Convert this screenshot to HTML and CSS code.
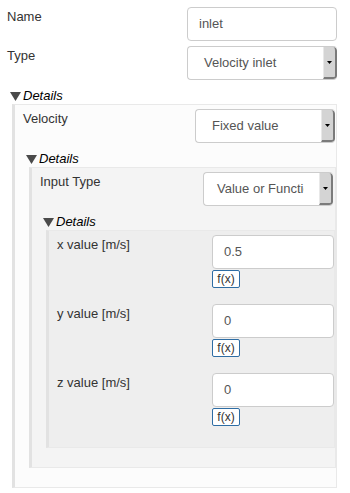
FILE: index.html
```html
<!DOCTYPE html>
<html>
<head>
<meta charset="utf-8">
<link rel="stylesheet" href="styles.css">
</head>
<body>
<div class="form">
  <div class="row">
    <span class="label">Name</span>
    <div class="ctl ctl-0"><div class="input">inlet</div></div>
  </div>
  <div class="row">
    <span class="label">Type</span>
    <div class="ctl ctl-0">
      <div class="select"><span class="select-text">Velocity inlet</span><span class="select-btn"><svg width="5" height="3" viewBox="0 0 5 3"><polygon points="0,0 5,0 2.5,3" fill="#000"/></svg></span></div>
    </div>
  </div>
  <div class="details">
    <div class="summary"><svg class="tri" width="11" height="9" viewBox="0 0 11 9"><polygon points="0,0 11,0 5.5,9" fill="#4a4a4a"/></svg><span>Details</span></div>
    <div class="panel p1">
      <div class="row">
        <span class="label">Velocity</span>
        <div class="ctl ctl-1">
          <div class="select"><span class="select-text">Fixed value</span><span class="select-btn"><svg width="5" height="3" viewBox="0 0 5 3"><polygon points="0,0 5,0 2.5,3" fill="#000"/></svg></span></div>
        </div>
      </div>
      <div class="details details-nested">
        <div class="summary"><svg class="tri" width="11" height="9" viewBox="0 0 11 9"><polygon points="0,0 11,0 5.5,9" fill="#4a4a4a"/></svg><span>Details</span></div>
        <div class="panel p2">
          <div class="row">
            <span class="label">Input Type</span>
            <div class="ctl ctl-2">
              <div class="select"><span class="select-text select-text-tight">Value or Function</span><span class="select-btn"><svg width="5" height="3" viewBox="0 0 5 3"><polygon points="0,0 5,0 2.5,3" fill="#000"/></svg></span></div>
            </div>
          </div>
          <div class="details details-nested">
            <div class="summary"><svg class="tri" width="11" height="9" viewBox="0 0 11 9"><polygon points="0,0 11,0 5.5,9" fill="#4a4a4a"/></svg><span>Details</span></div>
            <div class="panel p3">
              <div class="row row-val">
                <span class="label">x value [m/s]</span>
                <div class="ctl ctl-3"><div class="input">0.5</div><span class="fx">f(x)</span></div>
              </div>
              <div class="row row-val">
                <span class="label">y value [m/s]</span>
                <div class="ctl ctl-3"><div class="input">0</div><span class="fx">f(x)</span></div>
              </div>
              <div class="row row-val">
                <span class="label">z value [m/s]</span>
                <div class="ctl ctl-3"><div class="input">0</div><span class="fx">f(x)</span></div>
              </div>
            </div>
          </div>
        </div>
      </div>
    </div>
  </div>
</div>
</body>
</html>
```

FILE: styles.css
```css
* { box-sizing: border-box; }

body {
  margin: 0;
  padding: 7px 13px 0 7px;
  background: #fff;
  font-family: "Liberation Sans", Arial, sans-serif;
  font-size: 13px;
  color: #333;
}

.row {
  display: flex;
  align-items: flex-start;
  margin-bottom: 5px;
}

.row-val { margin-bottom: 16px; }

.label {
  padding-top: 2px;
  line-height: 15px;
}

.ctl {
  margin-left: auto;
  display: flex;
  flex-direction: column;
  align-items: flex-start;
}

.ctl-0 { width: 150px; }
.ctl-1 { width: 140px; margin-right: 1px; }
.ctl-2 { width: 130px; margin-right: 2px; }
.ctl-3 { width: 122px; }

.input {
  width: 100%;
  height: 34px;
  border: 1px solid #ccc;
  border-radius: 4px;
  background: #fff;
  padding: 0 11px;
  line-height: 32px;
  color: #555;
}

.select {
  width: 100%;
  height: 34px;
  display: flex;
  border: 1px solid #ccc;
  border-right: none;
  border-radius: 4px;
  background: #fff;
  overflow: hidden;
}

.select-text {
  flex: 1;
  min-width: 0;
  padding-left: 16px;
  margin-right: 15px;
  line-height: 32px;
  color: #555;
  white-space: nowrap;
  overflow: hidden;
}

.select-text-tight { padding-left: 13px; }

.select-btn {
  width: 14px;
  height: 32px;
  display: flex;
  align-items: center;
  justify-content: center;
  background: #d4d4d4;
  border-left: 1px solid #e8e8e8;
  border-right: 2px solid #7b7b7b;
  border-bottom: 2px solid #7b7b7b;
  border-top-right-radius: 4px;
  border-bottom-right-radius: 3px;
}

.fx {
  margin-top: 1px;
  width: 28px;
  height: 18px;
  display: flex;
  align-items: center;
  justify-content: center;
  border: 1px solid #2e6da4;
  border-radius: 2px;
  background: #fff;
  font-size: 12px;
  color: #333;
}

.details { margin-top: 8px; }
.details-nested { margin-bottom: 15px; }

.summary {
  display: flex;
  align-items: flex-start;
  height: 15px;
  line-height: 15px;
  font-style: italic;
  color: #000;
}

.tri {
  margin-left: 3px;
  margin-top: 4px;
  margin-right: 2px;
  flex: none;
}

.panel {
  margin-top: 1px;
  border: 1px solid #e9e9e9;
  border-left: 3px solid #e2e2e2;
  padding: 4px 0 4px 8px;
}

.p1 { margin-left: 5px; background: #fcfcfc; }
.p2 { margin-left: 6px; background: #f4f4f4; }
.p3 { margin-left: 6px; background: #eeeeee; padding-bottom: 5px; }
```
